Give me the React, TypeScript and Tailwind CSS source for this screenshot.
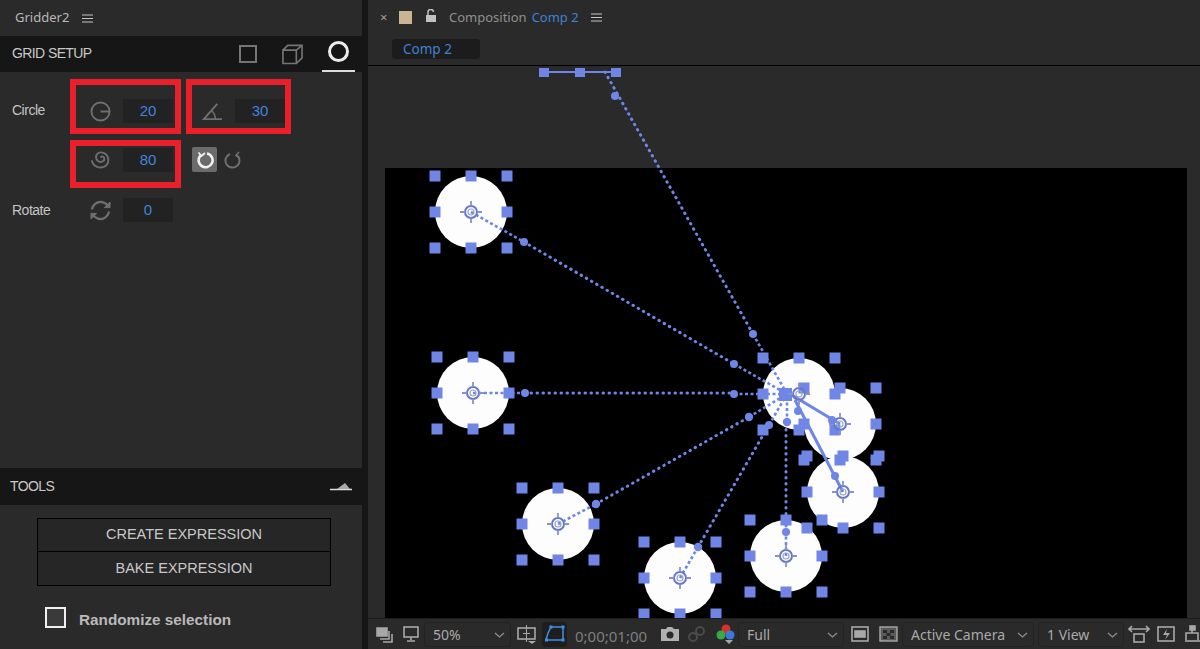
import React from "react";

const BLUE = "#6f86e6";
const circles: [number, number][] = [
  [471, 212], [473, 393], [558, 524], [680, 578], [786, 556], [843, 492], [840, 424], [799, 394],
];

function Handles({ cx, cy }: { cx: number; cy: number }) {
  const offs = [-36, 0, 36];
  return (
    <g fill={BLUE}>
      {offs.flatMap((dx) =>
        offs.map((dy) =>
          dx === 0 && dy === 0 ? null : (
            <rect key={`${dx}${dy}`} x={cx + dx - 5.5} y={cy + dy - 5.5} width={11} height={11} />
          )
        )
      )}
    </g>
  );
}

function Anchor({ cx, cy }: { cx: number; cy: number }) {
  return (
    <g fill="none">
      <circle cx={cx} cy={cy} r={6} strokeWidth={2} stroke="#6678c8" />
      <circle cx={cx} cy={cy} r={3} strokeWidth={1.2} stroke="#9aa4c4" />
      <path d={`M${cx - 11} ${cy}h5M${cx + 6} ${cy}h5M${cx} ${cy - 11}v5M${cx} ${cy + 6}v5`} strokeWidth={1.8} stroke="#8793c8" />
    </g>
  );
}

function Dotted({ d }: { d: string }) {
  return <path d={d} fill="none" stroke={BLUE} strokeWidth={3} strokeLinecap="round" strokeDasharray="0.5 5.5" />;
}

function Dense({ d }: { d: string }) {
  return <path d={d} fill="none" stroke={BLUE} strokeWidth={2.6} strokeDasharray="3 2.5" />;
}

function Canvas() {
  const dots: [number, number, number][] = [
    [615, 96, 4], [753, 334, 4], [524, 242, 4], [734, 364, 4], [525, 393, 4], [734, 394, 4],
    [596, 504, 4.2], [749, 417, 4.2], [698, 547, 4.2], [769, 425, 4], [787, 422, 4.2], [786, 532, 4],
    [832, 420, 4], [835, 476, 4], [798, 411, 4],
  ];
  return (
    <svg className="absolute inset-0 w-full h-full" viewBox="368 66 832 552">
      <path d="M544 72H616" stroke={BLUE} strokeWidth={1.8} />
      <g fill={BLUE}>
        <rect x={539} y={68} width={10} height={9} />
        <rect x={575} y={68} width={10} height={9} />
        <rect x={611} y={68} width={10} height={9} />
      </g>
      {circles.map(([x, y]) => (
        <circle key={x} cx={x} cy={y} r={36} fill="#fdfdfd" />
      ))}
      <Dotted d="M605 72L753 334" />
      <Dotted d="M524 242L734 364" />
      <Dotted d="M525 393H734" />
      <Dotted d="M596 504L749 417" />
      <Dotted d="M698 547L769 425" />
      <Dotted d="M786 532V422" />
      <Dense d="M753 334L787 394" />
      <Dense d="M734 364L787 394" />
      <Dense d="M734 394H787" />
      <Dense d="M749 417L787 394" />
      <Dense d="M769 425L787 394" />
      <Dense d="M787 422V394" />
      <Dense d="M471 212L524 242" />
      <Dense d="M473 393H525" />
      <Dense d="M558 524L596 504" />
      <Dense d="M680 578L698 547" />
      <Dense d="M786 556V532" />
      <g stroke={BLUE} fill="none">
        <path d="M790 394L840 424" strokeWidth={3.2} />
        <path d="M795 400L843 492" strokeWidth={3} />
      </g>
      {circles.map(([x, y]) => (
        <Handles key={x} cx={x} cy={y} />
      ))}
      <rect x={779} y={388} width={13} height={13} fill={BLUE} />
      {circles.map(([x, y]) => (
        <Anchor key={x} cx={x} cy={y} />
      ))}
      <g fill={BLUE}>
        {dots.map(([x, y, r]) => (
          <circle key={`${x}${y}`} cx={x} cy={y} r={r} />
        ))}
      </g>
    </svg>
  );
}

function Burger() {
  return (
    <svg width="11" height="9" viewBox="0 0 11 9" className="shrink-0">
      <path d="M0 1h11M0 4.500h11M0 8h11" stroke="#c4c4c4" strokeWidth="1.2" />
    </svg>
  );
}

function NumField({ v }: { v: string }) {
  return (
    <div className="w-[50px] h-6 bg-[#222222] text-[#3f82dd] text-[15px] flex items-center justify-center shrink-0">{v}</div>
  );
}

function RedBox({ children, className }: { children: React.ReactNode; className: string }) {
  return (
    <div className={`border-[6px] border-[#e9202a] flex justify-end shrink-0 ${className}`}>
      {children}
    </div>
  );
}

function Ic({ children, size = 21 }: { children: React.ReactNode; size?: number }) {
  return (
    <svg width={size} height={size} viewBox="0 0 22 22" fill="none" stroke="#6f6f6f" strokeWidth="2" className="shrink-0">
      {children}
    </svg>
  );
}

const CircleIcon = () => (
  <Ic>
    <circle cx="11" cy="11" r="9.500" />
    <path d="M11 11H20" />
  </Ic>
);
const AngleIcon = () => (
  <Ic>
    <path d="M16 3L2 19H21" />
    <path d="M10 10Q14 14 14 19" strokeWidth="1.6" />
  </Ic>
);
const SpiralIcon = () => (
  <Ic>
    <path d="M2 12C3 19 11 21 16 18C21 14 20 6 14 4C8 2 5 7 7 11C9 15 15 14 15 10C15 8 12 7 11 9" />
  </Ic>
);
const RotateIcon = () => (
  <Ic>
    <path d="M2 10C3 5 7 2 11 2C15 2 17 4 19 6" strokeWidth="2.400" />
    <path d="M20 12C19 17 15 20 11 20C7 20 5 18 3 16" strokeWidth="2.400" />
    <path d="M21 2V8H15Z M1 20V14H7Z" fill="#6f6f6f" strokeWidth="1" />
  </Ic>
);

function Dropdown({ w, label, className = "" }: { w: string; label: string; className?: string }) {
  return (
    <div className={`${w} h-[25px] mt-px shrink-0 border border-[#222222] rounded-sm flex items-center justify-between pl-[8px] pr-[5px] text-[14px] text-[#a9a9a9] ${className}`}>
      <span>{label}</span>
      <svg width="11" height="6" viewBox="0 0 11 6" fill="none" stroke="#8e8e8e" strokeWidth="1.3">
        <path d="M1 1L5.500 5L10 1" />
      </svg>
    </div>
  );
}

function T({ w, children, className = "" }: { w: number; children: React.ReactNode; className?: string }) {
  return (
    <svg width={w} height="20" viewBox={`0 0 ${w} 20`} fill="none" stroke="#a8a8a8" strokeWidth="1.6" className={`shrink-0 ${className}`}>
      {children}
    </svg>
  );
}

export default function App() {
  return (
    <div className="w-[1200px] h-[649px] bg-[#161616] flex overflow-hidden font-['Liberation_Sans',sans-serif]">
      {/* Left panel */}
      <div className="w-[362px] h-full bg-[#2a2a2a] flex flex-col shrink-0">
        <div className="h-9 flex items-center pl-[15px] gap-[13px] text-[13px] text-[#b8b8b8] font-['Noto_Sans',sans-serif]">
          <span>Gridder2</span>
          <Burger />
        </div>
        <div className="h-9 bg-[#161616] flex items-center pl-3 pb-px">
          <span className="text-[14px] tracking-[-0.6px] text-[#c9c9c9]">GRID SETUP</span>
          <div className="ml-auto flex items-center mr-[7px]">
            <svg width="18" height="18" viewBox="0 0 18 18" fill="none" stroke="#757575" strokeWidth="2" className="mr-[25px]">
              <rect x="1" y="1" width="16" height="16" />
            </svg>
            <svg width="21" height="22" viewBox="0 0 22 22" fill="none" stroke="#757575" strokeWidth="1.7" className="mr-[19px]">
              <path d="M1 7H15V21H1ZM1 7L6 2H21V15L15 21M15 7L21 2" />
            </svg>
            <div className="w-[33px] h-9 flex items-center justify-center border-b-2 border-[#dcdcdc]">
              <div className="size-[21px] rounded-full border-[3px] border-[#ececec] -mt-[3px]" />
            </div>
          </div>
        </div>
        <div className="flex-1">
          <div className="flex items-start mt-[7px]">
            <span className="w-[70px] pl-3 pt-[21px] text-[14px] tracking-[-0.5px] text-[#c4c4c4] shrink-0">Circle</span>
            <RedBox className="w-[111px] h-[55px] items-end pb-[5px] pr-[2px]">
              <div className="mr-[12px] mb-[1px]"><CircleIcon /></div>
              <NumField v="20" />
            </RedBox>
            <div className="w-[5px]" />
            <RedBox className="w-[105px] h-[55px] items-end pb-[5px]">
              <div className="mr-[12px] mb-[1px]"><AngleIcon /></div>
              <NumField v="30" />
            </RedBox>
          </div>
          <div className="flex items-start mt-[6px]">
            <div className="w-[70px] shrink-0" />
            <RedBox className="w-[111px] h-[48px] items-start pt-[2px] pr-[2px]">
              <div className="mr-[12px] mt-[1px]"><SpiralIcon /></div>
              <NumField v="80" />
            </RedBox>
            <div className="ml-[11px] mt-[7px] size-[25px] bg-[#6b6b6b] rounded-[2px] flex items-center justify-center">
              <svg width="18" height="18" viewBox="0 0 18 18" fill="none" stroke="#f1f1f1" strokeWidth="2.600">
                <path d="M5 4A7 7 0 1 0 11 2.400" />
                <path d="M2.500 1.500L5.500 5L9 2" strokeWidth="1.800" />
              </svg>
            </div>
            <svg width="18" height="18" viewBox="0 0 18 18" fill="none" stroke="#6f6f6f" strokeWidth="2" className="ml-[7px] mt-[11px]">
              <path d="M12 3.500A7 7 0 1 1 6 3" />
              <path d="M15 1L12 4.500L16 7" strokeWidth="1.600" />
            </svg>
          </div>
          <div className="flex items-center mt-[10px] h-6">
            <span className="w-[90px] pl-3 text-[14px] tracking-[-0.5px] text-[#c4c4c4] shrink-0">Rotate</span>
            <div className="w-[33px] shrink-0"><RotateIcon /></div>
            <NumField v="0" />
          </div>
        </div>
        <div className="h-[37px] bg-[#161616] flex items-center px-[10px] justify-between">
          <span className="text-[14px] tracking-[-0.6px] text-[#c9c9c9]">TOOLS</span>
          <svg width="22" height="8" viewBox="0 0 22 8">
            <path d="M0 6.500H22" stroke="#dddddd" strokeWidth="1.500" />
            <path d="M7 6L15 0L20 6Z" fill="#a8a8a8" />
          </svg>
        </div>
        <div className="h-[144px] pt-[13px] pl-[37px]">
          <div className="w-[294px] border border-black bg-[#262626] flex flex-col text-[#c8c8c8] text-[14.500px]">
            <div className="h-[33px] flex items-center justify-center border-b border-black">CREATE EXPRESSION</div>
            <div className="h-[33px] flex items-center justify-center">BAKE EXPRESSION</div>
          </div>
          <div className="flex items-center mt-[18px] ml-2">
            <div className="size-[21px] border-[2.500px] border-[#f0f0f0] bg-[#3a3a3a]" />
            <span className="ml-[13px] mt-[5px] text-[15.300px] font-bold text-[#b9b9b9]">Randomize selection</span>
          </div>
        </div>
      </div>

      {/* Divider */}
      <div className="w-[6px] shrink-0 bg-[#161616]" />

      {/* Viewer panel */}
      <div className="flex-1 min-w-0 h-full bg-[#2a2a2a] flex flex-col font-['Noto_Sans',sans-serif]">
        <div className="h-[35px] flex items-center text-[13px] text-[#8f8f8f] shrink-0 pl-[12px]">
          <span className="text-[13px] text-[#a0a0a0] w-[19px]">×</span>
          <div className="size-[13px] bg-[#c9b592]" />
          <svg width="12" height="13" viewBox="0 0 12 13" className="ml-[13px] -mt-[4px]">
            <path d="M3 6V3.500A2.700 2.700 0 0 1 8.500 3" fill="none" stroke="#c0c0c0" strokeWidth="1.500" />
            <path d="M1 6H11V13H1Z" fill="#c0c0c0" />
          </svg>
          <span className="ml-3">Composition</span>
          <span className="ml-[5px] text-[#3f82d0]">Comp 2</span>
          <div className="ml-3"><Burger /></div>
        </div>
        <div className="h-[31px] shrink-0 pl-[24px] pt-[4px] border-b border-black">
          <div className="w-[88px] h-[20px] bg-[#1c1c1c] rounded-sm text-[#3f82d0] text-[13.500px] pl-[11px] leading-[20px]">Comp 2</div>
        </div>
        <div className="flex-1 relative pt-[102px] pl-[17px] pr-[13px] min-h-0">
          <div className="w-full h-full bg-black" />
          <Canvas />
        </div>
        <div className="h-[31px] shrink-0 flex items-center pl-[8px] text-[#9a9a9a] bg-[#2a2a2a] border-t border-[#1d1d1d] overflow-hidden">
          <T w={17}>
            <path d="M1 4H11V12H1Z" fill="#a8a8a8" />
            <path d="M4 15H13V7M7 18H16V10" />
          </T>
          <T w={16} className="ml-[10px]">
            <rect x="1" y="3" width="14" height="10" />
            <path d="M8 13V16M4 17H12" />
          </T>
          <Dropdown w="w-[87px]" label="50%" className="ml-[5px]" />
          <T w={20} className="ml-[6px]">
            <rect x="1" y="4" width="17" height="11" />
            <path d="M9.500 1V18M6 9.500H13" strokeWidth="1" />
            <path d="M11 17H19L15 20Z" fill="#a8a8a8" stroke="none" />
          </T>
          <div className="ml-[5px] w-[25px] h-[25px] bg-[#1e1e1e] rounded-sm flex items-center justify-center shrink-0">
            <svg width="20" height="18" viewBox="0 0 20 18" fill="none" stroke="#3f8fe8" strokeWidth="1.500">
              <path d="M6 2H18V15H1L3 8Z" />
              <path d="M4.500 0.500h3v3h-3zM16.500 0.500h3v3h-3zM16.500 13.500h3v3h-3zM0 13.500h3v3h-3z" fill="#3f8fe8" stroke="none" />
            </svg>
          </div>
          <span className="ml-2 w-[77px] shrink-0 text-[15px] text-[#7f7f7f] mt-[4px] whitespace-nowrap">0;00;01;00</span>
          <T w={20} className="ml-[8px]">
            <path d="M1 5H6L7.500 3H12L14 5H19V17H1Z" fill="#b0b0b0" stroke="none" />
            <circle cx="10" cy="11" r="3.500" fill="#2a2a2a" stroke="none" />
          </T>
          <svg width="20" height="20" viewBox="0 0 20 20" className="ml-[7px] shrink-0" fill="none" stroke="#4a4a4a" strokeWidth="2">
            <circle cx="6" cy="13" r="4" />
            <circle cx="13" cy="7" r="4" />
          </svg>
          <svg width="20" height="20" viewBox="0 0 20 20" className="ml-[9px] shrink-0">
            <circle cx="10" cy="5" r="4.500" fill="#d8302a" />
            <circle cx="5" cy="11" r="4.500" fill="#3aa845" />
            <circle cx="14" cy="11" r="4.500" fill="#3b78e0" />
            <path d="M9 16H17L13 20Z" fill="#a8a8a8" />
          </svg>
          <Dropdown w="w-[106px]" label="Full" className="ml-[2px]" />
          <T w={19} className="ml-[7px]">
            <rect x="1" y="3" width="16" height="14" />
            <rect x="4" y="7" width="10" height="6" fill="#a8a8a8" />
          </T>
          <svg width="19" height="20" viewBox="0 0 19 20" className="ml-[9px] shrink-0">
            <rect x="1" y="3" width="17" height="14" fill="#5a5a5a" stroke="#a8a8a8" strokeWidth="1.400" />
            <path d="M4 6h4v3H4zM11 6h4v3h-4zM7.500 9h4v3h-4zM4 12h4v3H4zM11 12h4v3h-4z" fill="#2a2a2a" />
          </svg>
          <Dropdown w="w-[132px]" label="Active Camera" className="ml-[4px]" />
          <Dropdown w="w-[86px]" label="1 View" className="ml-[4px]" />
          <T w={22} className="ml-[4px]">
            <path d="M1 5H21M4 2L1 5L4 8M18 2L21 5L18 8" />
            <rect x="6" y="10" width="10" height="8" />
          </T>
          <T w={18} className="ml-[7px]">
            <rect x="1" y="3" width="16" height="14" />
            <path d="M10 5L6 11H10L8 16L13 9H9Z" fill="#a8a8a8" stroke="none" />
          </T>
          <T w={15} className="ml-[10px]">
            <path d="M1 16V9H13V16M7 9V5" />
            <rect x="5" y="2" width="5" height="4" fill="#a8a8a8" />
            <path d="M0 17H15" />
          </T>
        </div>
      </div>
    </div>
  );
}
